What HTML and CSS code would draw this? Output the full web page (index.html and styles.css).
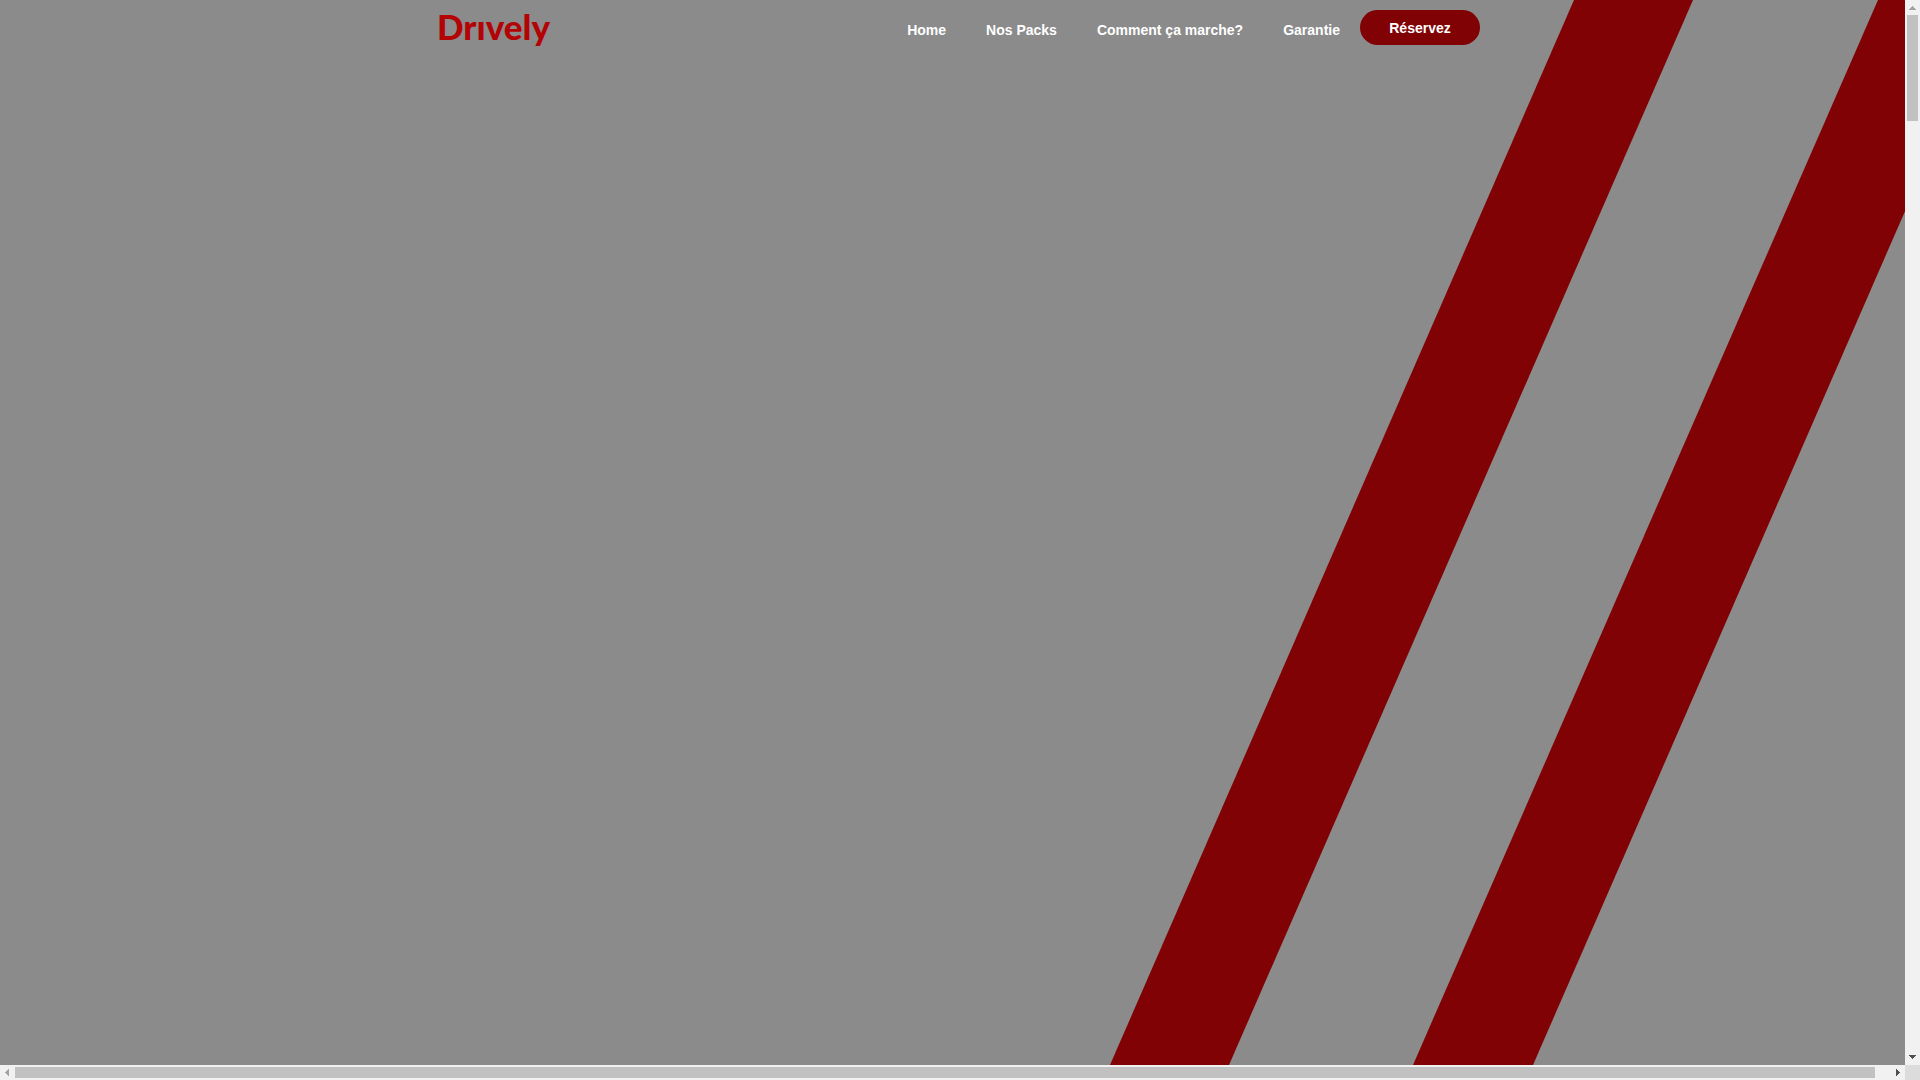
FILE: index.html
```html
<!DOCTYPE html>
<html lang="fr">
<head>
    <meta charset="UTF-8">
    <meta name="viewport" content="width=device-width, initial-scale=1.0">
    <title>Drively</title>
    <link rel="stylesheet" href="styles.css">
</head>
<body>
    <div class="window">
        <main class="hero">
            <svg class="hero-bg" viewBox="0 0 1905 1065" preserveAspectRatio="xMaxYMid slice" aria-hidden="true">
                <polygon points="1574,0 1693,0 1229,1065 1110,1065"/>
                <polygon points="1878,0 1997,0 1533,1065 1413,1065"/>
            </svg>
            <header class="navbar">
                <a class="logo" href="#" aria-label="Drively">Drıvely</a>
                <nav class="menu">
                    <a href="#home">Home</a>
                    <a href="#packs">Nos Packs</a>
                    <a href="#comment">Comment ça marche?</a>
                    <a href="#garantie">Garantie</a>
                </nav>
                <button class="reserve" type="button">Réservez</button>
            </header>
        </main>
        <div class="bar bar-v" aria-hidden="true">
            <svg class="arrow off" viewBox="0 0 15 15"><path d="M4 10h7v-1h-1v-1h-1v-1h-1v-1h-1v1h-1v1h-1v1h-1z"/></svg>
            <div class="track"><div class="thumb"></div></div>
            <svg class="arrow" viewBox="0 0 15 15"><path d="M4 5h7v1h-1v1h-1v1h-1v1h-1v-1h-1v-1h-1v-1h-1z"/></svg>
        </div>
        <div class="bar bar-h" aria-hidden="true">
            <svg class="arrow off" viewBox="0 0 15 15"><path d="M9 4v7h-1v-1h-1v-1h-1v-1h-1v-1h1v-1h1v-1h1v-1z"/></svg>
            <div class="track"><div class="thumb"></div></div>
            <svg class="arrow" viewBox="0 0 15 15"><path d="M6 4v7h1v-1h1v-1h1v-1h1v-1h-1v-1h-1v-1h-1v-1z"/></svg>
        </div>
        <div class="corner"></div>
    </div>
</body>
</html>
```
FILE: styles.css
```css
*{
    box-sizing: border-box;
}
body{
    margin: 0;
    font-family: "Liberation Sans", Arial, sans-serif;
    font-size: 14px;
}
.window{
    display: grid;
    grid-template-columns: 1fr 15px;
    grid-template-rows: 1fr 15px;
    height: 100vh;
}

/* hero */
.hero{
    position: relative;
    overflow: hidden;
    background-color: #8b8b8b;
}
.hero-bg{
    position: absolute;
    inset: 0;
    width: 100%;
    height: 100%;
    fill: #800205;
}
.navbar{
    position: relative;
    display: flex;
    align-items: flex-start;
    max-width: 1055px;
    margin: 0 auto;
    padding: 10px 0 0 12px;
}
.logo{
    margin-right: auto;
    font-family: Lato, sans-serif;
    font-size: 35px;
    font-weight: 900;
    line-height: 33px;
    color: #b30305;
    text-decoration: none;
}
.menu{
    display: flex;
}
.menu a{
    padding: 0 20px;
    line-height: 40px;
    font-weight: bold;
    color: #fff;
    text-decoration: none;
}
.reserve{
    width: 120px;
    height: 35px;
    padding: 0;
    border: none;
    border-radius: 18px;
    background-color: #800205;
    color: #fff;
    font-family: inherit;
    font-size: 14px;
    font-weight: bold;
}

/* scrollbars */
.bar{
    display: flex;
    background-color: #f1f1f1;
}
.bar-v{
    flex-direction: column;
}
.track{
    flex: 1;
}
.thumb{
    background-color: #c1c1c1;
}
.bar-v .thumb{
    height: 10.2%;
    margin: 0 2px;
}
.bar-h .track{
    padding: 2px 0;
}
.bar-h .thumb{
    width: 99.2%;
    height: 100%;
}
.arrow{
    flex: none;
    width: 15px;
    height: 15px;
    fill: #505050;
    shape-rendering: crispEdges;
}
.arrow.off{
    fill: #a3a3a3;
}
.corner{
    background-color: #dcdcdc;
}
```
